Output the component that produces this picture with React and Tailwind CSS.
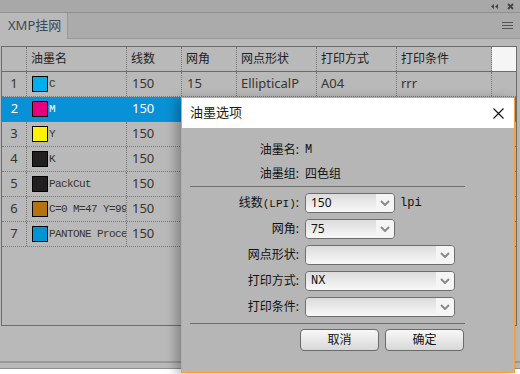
import React from "react";

const rows = [
  { n: "1", name: "C", color: "#00aeef", lpi: "150", ang: "15", shape: "EllipticalP", mode: "A04", cond: "rrr" },
  { n: "2", name: "M", color: "#e6007e", lpi: "150", ang: "", shape: "", mode: "", cond: "", sel: true },
  { n: "3", name: "Y", color: "#fff200", lpi: "150", ang: "", shape: "", mode: "", cond: "" },
  { n: "4", name: "K", color: "#231f20", lpi: "150", ang: "", shape: "", mode: "", cond: "" },
  { n: "5", name: "PackCut", color: "#231f20", lpi: "150", ang: "", shape: "", mode: "", cond: "" },
  { n: "6", name: "C=0 M=47 Y=99", color: "#b4730f", lpi: "150", ang: "", shape: "", mode: "", cond: "" },
  { n: "7", name: "PANTONE Proce", color: "#0094d4", lpi: "150", ang: "", shape: "", mode: "", cond: "" },
];

const headers = ["", "油墨名", "线数", "网角", "网点形状", "打印方式", "打印条件"];

function Chevron() {
  return (
    <svg width="10" height="6" viewBox="0 0 10 6">
      <polyline points="1,1 5,5 9,1" fill="none" stroke="#8a8a8a" strokeWidth="2" />
    </svg>
  );
}

function Select({ w, value, mono }) {
  return (
    <div className={`flex h-[20px] ${w} rounded-[4px] border border-[#6d6d6d] overflow-hidden`}>
      <div
        className={`flex-1 flex items-center pl-[5px] bg-gradient-to-b from-[#dcdcdc] to-[#f8f8f8] text-[12px] text-[#111] ${
          mono ? "font-['Liberation_Mono',monospace]" : ""
        }`}
      >
        {value}
      </div>
      <div className="w-[18px] bg-[#f5f5f5] flex items-center justify-center">
        <Chevron />
      </div>
    </div>
  );
}

function Label({ children }) {
  return <div className="w-[110px] text-right text-[12px] text-[#111] pr-[1px] whitespace-nowrap">{children}</div>;
}

export default function App() {
  return (
    <div className="relative w-[520px] h-[374px] overflow-hidden bg-[#b9b9b9] font-['Noto_Sans','Noto_Sans_CJK_SC',sans-serif]">
      {/* top bar */}
      <div className="h-[13px] bg-[#a8a8a8] border-b border-[#909090] flex justify-end items-center pr-[6px] gap-[9px]">
        <svg width="7" height="5" viewBox="0 0 7 5">
          <polygon points="3,0 3,5 0,2.5" fill="#444" />
          <polygon points="7,0 7,5 4,2.5" fill="#444" />
        </svg>
        <svg width="7" height="7" viewBox="0 0 7 7">
          <path d="M1 1 L6 6 M6 1 L1 6" stroke="#444" strokeWidth="1.8" />
        </svg>
      </div>
      {/* tab row */}
      <div className="h-[26px] flex">
        <div className="w-[68px] h-full bg-[#b9b9b9] border-r border-[#9a9a9a] flex items-center pl-[8px] text-[13px] text-[#3e4858]">
          XMP挂网
        </div>
        <div className="flex-1 h-full bg-[#ababab] border-b border-[#9a9a9a] flex items-center justify-end pr-[7px]">
          <svg width="11" height="7" viewBox="0 0 11 7">
            <path d="M0 0.5 H11 M0 3.5 H11 M0 6.5 H11" stroke="#555" strokeWidth="1" />
          </svg>
        </div>
      </div>
      {/* table */}
      <div className="mt-[7px] ml-[1px] w-[516px] h-[280px] border border-[#6c6c6c] overflow-hidden">
        <div className="grid grid-cols-[25px_100px_55px_55px_80px_80px_95px_1fr] h-[25px] border-b border-[#6c6c6c]">
          {headers.map((h, i) => (
            <div key={i} className="border-r border-dotted border-[#777] flex items-center pl-[4px] text-[12px] text-[#1e1e1e]">
              {h}
            </div>
          ))}
          <div className="bg-[#f5f5f5]"></div>
        </div>
        {rows.map((r) => {
          const cell = r.sel
            ? "flex items-center text-white"
            : "flex items-center border-r border-dotted border-[#777] text-[#38342c]";
          return (
            <div
              key={r.n}
              className={`grid grid-cols-[25px_100px_55px_55px_80px_80px_95px_1fr] h-[25px] border-b border-dotted border-[#777] text-[13px] ${r.sel ? "bg-[#0891d6]" : ""}`}
            >
              <div className={`${cell} justify-center`}>{r.n}</div>
              <div className={`${cell} pl-[5px] overflow-hidden whitespace-nowrap`}>
                <div className="w-[16px] h-[16px] shrink-0 border border-black" style={{ background: r.color }}></div>
                <span className="text-[11px] tracking-[-0.6px] font-['Liberation_Mono',monospace] pl-[1px]">{r.name}</span>
              </div>
              <div className={`${cell} pl-[5px]`}>{r.lpi}</div>
              <div className={`${cell} pl-[5px]`}>{r.ang}</div>
              <div className={`${cell} pl-[4px] overflow-hidden whitespace-nowrap`}>{r.shape}</div>
              <div className={`${cell} pl-[4px]`}>{r.mode}</div>
              <div className={`${cell} pl-[4px]`}>{r.cond}</div>
              <div></div>
            </div>
          );
        })}
      </div>
      {/* bottom bands */}
      <div className="mt-[35px] h-[2px] bg-[#9a9a9a]"></div>
      <div className="mt-[5px] h-px bg-[#8e8e8e]"></div>
      <div className="h-[10px] bg-white"></div>

      {/* dialog */}
      <div className="absolute left-[181px] top-[97px] w-[334px] h-[276px] border border-[#f5a03c] bg-[#b6b6b6] shadow-[-5px_2px_10px_rgba(0,0,0,0.28)] flex flex-col">
        <div className="h-[30px] bg-white flex items-center justify-between pl-[8px] pr-[10px]">
          <span className="text-[13px] text-[#1a1a1a]">油墨选项</span>
          <svg width="11" height="11" viewBox="0 0 11 11">
            <path d="M0.5 0.5 L10.5 10.5 M10.5 0.5 L0.5 10.5" stroke="#111" strokeWidth="1.1" />
          </svg>
        </div>
        <div className="pl-[8px] pt-[10px] w-[283px] flex flex-col">
          <div className="h-[24px] flex items-center">
            <Label>油墨名:</Label>
            <span className="ml-[5px] text-[12px] text-[#111] font-['Liberation_Mono',monospace]">M</span>
          </div>
          <div className="h-[24px] flex items-center">
            <Label>油墨组:</Label>
            <span className="ml-[5px] text-[12px] text-[#111]">四色组</span>
          </div>
          <div className="h-px bg-[#6e6e6e]"></div>
          <div className="mt-[6px] flex flex-col gap-[6px]">
            <div className="flex items-center">
              <Label>
                线数<span className="font-['Liberation_Mono',monospace] text-[11px]">(LPI)</span>:
              </Label>
              <div className="ml-[5px]"><Select w="w-[90px]" value="150" /></div>
              <span className="ml-[5px] text-[12px] text-[#111] font-['Liberation_Mono',monospace]">lpi</span>
            </div>
            <div className="flex items-center">
              <Label>网角:</Label>
              <div className="ml-[5px]"><Select w="w-[90px]" value="75" /></div>
            </div>
            <div className="flex items-center">
              <Label>网点形状:</Label>
              <div className="ml-[5px]"><Select w="w-[150px]" value="" /></div>
            </div>
            <div className="flex items-center">
              <Label>打印方式:</Label>
              <div className="ml-[5px]"><Select w="w-[150px]" value="NX" mono /></div>
            </div>
            <div className="flex items-center">
              <Label>打印条件:</Label>
              <div className="ml-[5px]"><Select w="w-[150px]" value="" /></div>
            </div>
          </div>
          <div className="mt-[6px] h-px bg-[#6e6e6e]"></div>
          <div className="mt-[5px] flex justify-end gap-[6px] pr-[1px]">
            <div className="w-[79px] h-[22px] rounded-[4px] border border-[#6a6a6a] bg-gradient-to-b from-[#f8f8f8] to-[#d8d8d8] flex items-center justify-center text-[12px] text-[#111]">
              取消
            </div>
            <div className="w-[79px] h-[22px] rounded-[4px] border border-[#6a6a6a] bg-gradient-to-b from-[#f8f8f8] to-[#d8d8d8] flex items-center justify-center text-[12px] text-[#111]">
              确定
            </div>
          </div>
        </div>
      </div>
    </div>
  );
}
